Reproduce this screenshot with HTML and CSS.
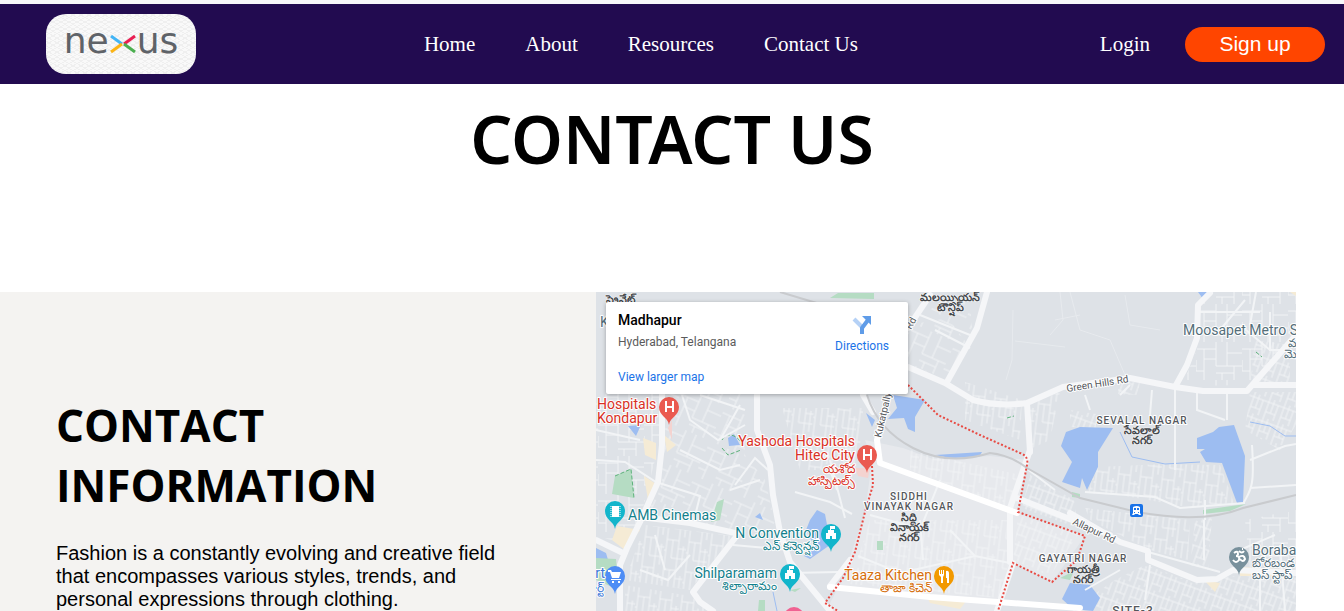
FILE: index.html
```html
<!DOCTYPE html>
<html lang="en">
<head>
<meta charset="utf-8">
<title>Contact Us</title>
<link rel="stylesheet" href="styles.css">
</head>
<body>
<header class="navbar">
  <a class="logo" href="#" aria-label="nexus">
    <span>ne</span>
    <svg class="logo-x" viewBox="0 0 26 18" aria-hidden="true">
      <path d="M1 1 12 9" stroke="#42b4f5"/><path d="M25 1 14 9" stroke="#e91e52"/>
      <path d="M1 17 12 9" stroke="#fbb416"/><path d="M25 17 14 9" stroke="#4caf50"/>
    </svg>
    <span>us</span>
  </a>
  <nav class="menu">
    <a href="#">Home</a><a href="#">About</a><a href="#">Resources</a><a href="#">Contact Us</a>
  </nav>
  <div class="account">
    <a href="#">Login</a>
    <button class="signup" type="button">Sign up</button>
  </div>
</header>
<main class="page">
  <h1 class="title">CONTACT US</h1>
  <section class="contact">
    <div class="info">
      <h2>CONTACT INFORMATION</h2>
      <p>Fashion is a constantly evolving and creative field that encompasses various styles, trends, and personal expressions through clothing.</p>
    </div>
    <div class="map">
      <svg class="map-canvas" viewBox="596 292 700 319" preserveAspectRatio="xMinYMin slice" role="img" aria-label="Map of Madhapur">
        <defs>
          <pattern id="blocks" width="46" height="38" patternUnits="userSpaceOnUse">
            <path class="lane" d="M0 7H20V0M8 7V38M20 7V24H46M31 0V24M0 29H8M8 17H20M31 11H46M38 24V38M20 31H38M26 31V38M0 18V29"/>
          </pattern>
          <pattern id="slanted" width="46" height="38" patternUnits="userSpaceOnUse" patternTransform="rotate(24)">
            <path class="lane" d="M0 7H20V0M8 7V38M20 7V24H46M31 0V24M0 29H8M8 17H20M31 11H46M38 24V38M20 31H38M26 31V38"/>
          </pattern>
          <pattern id="tight" width="22" height="30" patternUnits="userSpaceOnUse" patternTransform="rotate(7)">
            <path class="lane" d="M2 0V30M8 4V22M14 0V30M19 9V30M2 4H14M8 22H22M0 15H2M14 12H22"/>
          </pattern>
          <pattern id="fine" width="16" height="20" patternUnits="userSpaceOnUse" patternTransform="rotate(20)">
            <path class="lane" d="M2 0V20M7 0V14M12 4V20M0 4H16M2 14H12"/>
          </pattern>
          <path id="pin" d="M0 18C-1 10-10 9-10 0A10 10 0 0 1 10 0C10 9 1 10 0 18Z"/>
        </defs>
        <rect class="ground" x="596" y="292" width="700" height="319"/>
        <path class="town" d="M872 462 1017 513 1085 536 1052 582 1013 563 998 611H826L843 578 865 512Z"/>
        <path class="town" d="M865 440 903 448 933 459 990 456 1027 460 1018 512 873 462Z"/>

        <g>
          <path fill="url(#blocks)" d="M596 394H660V440L640 520 625 545 596 535Z"/>
          <path fill="url(#slanted)" d="M664 394H745V455L765 480 778 535 735 530 645 515 662 480Z"/>
          <path fill="url(#tight)" d="M782 408H863V428L855 470H800ZM645 525 733 536 690 590 625 580ZM625 585 690 596 710 611H625Z"/>
          <path fill="url(#slanted)" d="M908 325 948 318 968 345 948 380 908 364ZM970 300 948 294 930 310 972 330Z"/>
          <path fill="url(#tight)" d="M965 382 1022 400 1020 440 965 420ZM1028 405 1060 392 1050 440 1028 450Z"/>
          <path fill="url(#blocks)" d="M1200 292H1296V330L1250 385 1182 386 1197 350Z"/>
          <path fill="url(#fine)" d="M1250 392H1296V425L1280 450 1245 430ZM1255 340 1290 345V385H1250Z"/>
          <path fill="url(#tight)" d="M870 520 1010 520V558L1000 598 850 584ZM910 450 1020 475 1010 508 910 470Z"/>
          <path fill="url(#fine)" d="M1018 515 1078 535 1050 576 1013 560ZM1030 475 1074 500 1078 528 1022 508Z"/>
          <path fill="url(#tight)" d="M1096 467 1165 464 1220 465 1234 503 1187 507 1120 495 1088 493ZM1085 508 1190 520 1188 560 1150 550 1090 520Z"/>
          <path fill="url(#fine)" d="M1195 520 1212 518 1208 570 1190 565ZM1145 565 1196 583 1232 576 1296 577V611H1070L1115 580Z"/>
          <path fill="url(#blocks)" d="M1245 520 1296 510V570H1250Z"/>
          <path fill="url(#fine)" d="M1118 380 1140 383 1137 395 1118 394ZM1070 410 1096 414V428L1070 427Z"/>
        </g>

        <g class="water">
          <path d="M893 395 925 400 915 417 915 432 908 429 904 418 888 419 897 408Z"/>
          <path d="M1066 432 1080 427 1113 428 1098 452 1098 467 1087 490 1082 478 1080 488 1062 482 1072 462 1061 446Z"/>
          <path d="M1197 438 1213 432 1219 427 1234 425 1245 456 1243 502 1237 503 1222 463 1206 462 1200 452 1205 449 1197 449Z"/>
          <path d="M1062 599 1070 583 1090 585 1100 598 1093 611 1073 609Z"/>
          <path d="M810 520 817 510 825 514 828 530 830 545 810 559 804 556 814 545 806 530Z"/>
          <path d="M935 455 982 452 979 457 950 458ZM1198 292H1210L1203 299Z"/>
          <path d="M628 426 641 425 636 436ZM728 438 734 434 740 445 729 446ZM760 513 763 520 755 517ZM866 413 875 420 872 427ZM596 548 606 553 611 570 596 565Z"/>
          <path class="brook" d="M1250 422 1270 426 1285 436 1296 436M1120 432 1132 457 1165 464 1200 462M773 592 777 611"/>
        </g>
        <g class="park">
          <path d="M615 476 631 469 634 498 612 494ZM717 502 724 499 720 520 711 522ZM830 298 838 293 874 293V299ZM877 541H883V550H877ZM1072 492 1080 494V498L1072 497ZM1203 510 1246 504 1230 511 1203 514ZM1060 578 1074 571 1070 580ZM790 590 801 588 795 592ZM759 600H765V611H758ZM596 558 616 559 619 590 596 580Z"/>
          <path class="park-edge" d="M722 440C726 432 735 434 741 442M722 448 728 455 741 450M1007 418 1014 416M1256 352 1262 357M615 476 631 469 634 498"/>
        </g>
        <g class="shops">
          <path d="M643 438 656 443V460L645 455ZM664 435 676 445 667 452ZM644 476 656 484 648 500ZM617 526 640 530 625 550 612 540ZM927 597 967 600 960 609 930 603ZM1204 580 1220 583 1215 592ZM1240 567 1296 570V576H1240ZM1290 292H1296V296Z"/>
          <path class="clinic" d="M668 428 672 420 672 440ZM855 468 870 468 868 478 858 476Z"/>
        </g>

        <g class="street">
          <path d="M596 460 625 462 656 482 700 496 694 520M680 450 720 470 740 465M682 395 690 420 718 440 745 425M740 405 720 440M700 395 745 410M730 490 760 480M735 485 755 458 768 470M795 492 830 502 852 514M830 470 837 490M640 570 668 580 690 555M655 535 665 570M790 573 838 572M845 518 830 460M733 545 790 550M596 430 640 440"/>
          <path d="M870 515 910 526M858 556 900 573 975 556 1010 563M920 520 923 560M940 480 920 530M950 530 975 556M1022 465 1055 490M935 330 970 348M920 315 970 335M1200 312 1260 312M1256 292 1250 325M1270 312V350L1283 350M1240 325 1270 350M1220 330 1245 300M1152 390 1150 415M1175 390V470M1197 390V410L1225 420M1227 392V420M1205 500V520M1204 520V560M1120 395 1130 385M1085 395 1090 410"/>
          <path d="M1252 445C1255 490 1250 490 1243 504M1250 460 1285 446 1296 444M1250 488 1296 485M1085 492 1155 497 1180 508 1245 503M1240 550 1275 535M1148 552 1220 572M1150 565 1145 600M1280 545 1285 611M1260 580V611M1085 590 1120 570"/>
        </g>
        <path class="trail" d="M1013 310 1012 360 1006 380M1015 341 1065 347M1070 292 1080 330 1110 340 1125 375M1055 320 1080 315M1125 295 1130 325 1160 330M1060 292 1063 320 1050 335"/>
        <g class="road">
          <path d="M662 394 662 445 658 482 640 522 627 548 620 565 620 611M596 540 623 553M640 517 690 523 735 533M735 538 693 592 700 602 713 611M757 394V430L770 465 773 495 780 532 790 562 817 595 830 611M863 395 873 412M930 295 908 328"/>
          <path d="M908 367 945 383 973 400Q1000 407 1027 403L1063 387 1130 378 1175 387 1203 391H1247L1296 335M987 292 977 328 947 382M1210 293 1198 305 1197 338 1187 365 1175 387M1253 385H1296M1027 403 1030 452"/>
          <path d="M1030 450 1010 508V562M1017 498 1110 535M1070 513 1120 542 1148 551 1148 560 1197 580 1217 579 1233 570 1296 573M1013 563 997 611M830 586 850 560"/>
          <path class="avenue" d="M890 390 877 440 880 463 1017 513M830 587 930 597 1080 608"/>
        </g>
        <path class="rail" d="M867 395Q878 430 913 448T990 453Q1010 455 1027 468L1080 498 1137 512Q1203 524 1243 508L1296 495"/>
        <path class="rail" d="M780 292 820 304"/>
        <path class="boundary" d="M908 385 938 415 980 435 1020 453Q1029 456 1027 465L1018 512 1085 536 1077 560 1052 582 1013 563 998 611M872 466 873 485 865 512 855 552 843 578 825 603 838 611"/>

        <g class="pins">
          <use href="#pin" x="669" y="407" fill="#ea5a50"/><use href="#pin" x="867" y="455" fill="#ea5a50"/>
          <use href="#pin" x="615" y="511" fill="#12b5cb"/><use href="#pin" x="831" y="534" fill="#12b5cb"/>
          <use href="#pin" x="790" y="574" fill="#12b5cb"/><use href="#pin" x="615" y="576" fill="#4e8df5"/>
          <use href="#pin" x="944" y="576" fill="#f29900"/><use href="#pin" x="1239" y="557" fill="#78909c"/>
          <use href="#pin" x="794" y="617" fill="#f06292"/>
        </g>
        <g class="pin-mark">
          <path d="M666 401V412M673 401V412M666 407H673M864 449V460M871 449V460M864 455H871"/>
        </g>
        <g class="pin-fill">
          <path d="M612 506h7v11h-7z"/>
          <path d="M826 539v-6h2v-3h2v-4h5v3h-4v1h3v3h2v6h-4v-3h-2v3zM785 579v-6h2v-3h2v-4h5v3h-4v1h3v3h2v6h-4v-3h-2v3z"/>
          <path d="M608 570h3l1 2h9l-2 6h-7l-2-6h-2zM611 579h10v1h-10zM612 581h2v2h-2zM618 581h2v2h-2z"/>
          <path d="M939 570h1v4h1v-4h1v4h1v-4h1v5l-1 2v6h-2v-6l-2-2zM946 571q3-1 3 3v9h-2v-5h-1z"/>
        </g>
        <path class="film" d="M611 506V517M620 506V517"/>
        <path class="om" d="M1234 553q4-3 4 1 0 2-2 2 4 0 3 4-3 4-6 0M1239 557q5-3 6 2-2 4-5 0M1239 551q3 3 5 0M1242 549h1"/>
        <rect x="1130" y="504" width="13" height="13" rx="2" fill="#1a73e8"/>
        <path fill="#fff" fill-rule="evenodd" d="M1133 507q4-2 7 0v6l1 2h-2l-1-1h-3l-1 1h-2l1-2zM1134 508v2h2v-2zm3 0v2h2v-2zm-3 4v1h1v-1zm4 0v1h1v-1z"/>

        <g class="label red">
          <text x="597" y="409">Hospitals</text><text x="597" y="423">Kondapur</text>
          <text x="855" y="446" text-anchor="end">Yashoda Hospitals</text><text x="855" y="460" text-anchor="end">Hitec City</text>
          <text class="small" x="855" y="473" text-anchor="end">యశోద</text><text class="small" x="855" y="485" text-anchor="end">హాస్పిటల్స్</text>
        </g>
        <g class="label teal">
          <text x="628" y="520">AMB Cinemas</text>
          <text x="819" y="538" text-anchor="end">N Convention</text><text class="small" x="819" y="550" text-anchor="end">ఎన్ కన్వెన్షన్</text>
          <text x="777" y="578" text-anchor="end">Shilparamam</text><text class="small" x="777" y="590" text-anchor="end">శిల్పారామం</text>
        </g>
        <g class="label orange">
          <text x="932" y="580" text-anchor="end">Taaza Kitchen</text><text class="small" x="932" y="592" text-anchor="end">తాజా కిచెన్</text>
        </g>
        <g class="label slate">
          <text x="1183" y="335">Moosapet Metro Station</text><text class="small" x="1288" y="347">మూసాపేట</text><text class="small" x="1284" y="358">మెట్రో</text>
          <text x="1252" y="555">Borabanda</text><text class="small" x="1252" y="567">బోరబండ</text><text class="small" x="1252" y="579">బస్ స్టాప్</text>
          <text x="600" y="327">K</text>
        </g>
        <g class="label blue"><text x="605" y="578" text-anchor="end">Mart</text><text class="small" x="604" y="592" text-anchor="end">మార్ట్</text></g>
        <g class="label area-local">
          <text x="909" y="521">సిద్ధి</text><text x="909" y="531">వినాయక్</text><text x="909" y="541">నగర్</text>
          <text x="1142" y="434">సేవలాల్</text><text x="1142" y="444">నగర్</text>
          <text x="1083" y="573">గాయత్రీ</text><text x="1083" y="583">నగర్</text>
          <text x="950" y="301">మలయ్సియన్</text><text x="950" y="311">టౌన్షిప్</text><text x="620" y="303">ప్రైవేట్</text>
        </g>
        <g class="label area">
          <text x="909" y="500">SIDDHI</text><text x="909" y="510">VINAYAK NAGAR</text>
          <text x="1142" y="424">SEVALAL NAGAR</text>
          <text x="1083" y="562">GAYATRI NAGAR</text>
          <text class="site" x="1133" y="615">SITE-3</text>
        </g>
        <g class="label way">
          <text transform="translate(1067 392) rotate(-9)">Green Hills Rd</text>
          <text transform="translate(1072 524) rotate(25)">Allapur Rd</text>
          <text transform="translate(881 438) rotate(-77)">Kukatpally</text>
          <text transform="translate(911 330) rotate(-62)">Rd</text>
        </g>
      </svg>
      <div class="place">
        <div class="place-text">
          <strong>Madhapur</strong>
          <span>Hyderabad, Telangana</span>
          <a href="#">View larger map</a>
        </div>
        <a class="directions" href="#">
          <svg viewBox="0 0 20 20" aria-hidden="true">
            <path d="M2 4 10 12" stroke="#b5d1f6" stroke-width="4" fill="none"/>
            <path d="M10 19V13L16 5" stroke="#5f9ce8" stroke-width="4" fill="none" stroke-linejoin="round"/>
            <path d="M10 1H19V10Z" fill="#5f9ce8"/>
          </svg>
          Directions
        </a>
      </div>
    </div>
  </section>
</main>
</body>
</html>
```

FILE: styles.css
```css
* { box-sizing: border-box; }
body {
  margin: 0;
  min-height: 100vh;
  display: flex;
  flex-direction: column;
  background: #fff;
  color: #000;
  font-family: "Liberation Sans", Arial, sans-serif;
  border-top: 4px solid #f8f8fa;
}
a { color: inherit; text-decoration: none; }

.navbar {
  display: flex;
  align-items: center;
  justify-content: space-between;
  height: 80px;
  padding: 0 19px 0 46px;
  background: #220b50;
  color: #fff;
  font: 21px/24px "Liberation Serif", "Times New Roman", serif;
}
.logo {
  display: flex;
  align-items: center;
  justify-content: center;
  width: 150px;
  height: 60px;
  border-radius: 20px;
  background:
    repeating-linear-gradient(30deg, #efefef 0 1px, transparent 1px 4px),
    repeating-linear-gradient(-30deg, #efefef 0 1px, transparent 1px 4px),
    #f9f9f9;
  color: #5f6368;
  font: 400 36px/40px "DejaVu Sans", sans-serif;
}
.logo span { padding-bottom: 6px; }
.logo-x { width: 28px; height: 18px; fill: none; stroke-width: 3; }
.menu { display: flex; gap: 50px; padding-right: 14px; }
.account { display: flex; align-items: center; gap: 35px; }
.signup {
  width: 140px;
  height: 35px;
  padding: 0;
  border: 0;
  border-radius: 18px;
  background: #ff4500;
  color: #fff;
  font: 21px/24px "Liberation Sans", Arial, sans-serif;
}

.page { flex: 1; display: flex; flex-direction: column; }
.title {
  margin: 0;
  padding: 12px 0 112px;
  text-align: center;
  font: 600 66px/84px "Noto Sans", sans-serif;
}
.contact {
  flex: 1;
  display: grid;
  grid-template-columns: 596fr 700fr;
  margin-right: 48px;
}
.info { padding: 103px 56px 0; background: #f4f3f1; }
.info h2 {
  margin: 0;
  max-width: 400px;
  font: 700 44px/60px "Open Sans", "Segoe UI", sans-serif;
}
.info p { max-width: 450px; margin: 27px 0 0; font-size: 20px; line-height: 23px; }

.map { position: relative; overflow: hidden; font-family: Roboto, sans-serif; }
.map-canvas { position: absolute; inset: 0; width: 100%; height: 100%; }
.place {
  position: absolute;
  top: 10px;
  left: 10px;
  display: flex;
  justify-content: space-between;
  width: 302px;
  height: 92px;
  padding: 9px 19px 0 12px;
  border-radius: 2px;
  background: #fff;
  box-shadow: 0 1px 4px rgba(0, 0, 0, .3);
  font-size: 12px;
  line-height: 16px;
}
.place-text { display: flex; flex-direction: column; }
.place-text strong { font-size: 14px; line-height: 18px; font-weight: 500; }
.place-text span { margin: 5px 0 19px; color: #5b5b5b; }
.place a { color: #1a73e8; }
.directions { display: flex; flex-direction: column; align-items: center; gap: 3px; padding-top: 4px; }
.directions svg { width: 20px; height: 20px; }

.ground { fill: #dee2e7; }
.town { fill: #e7e9ed; }
.lane, .street, .road, .trail, .rail, .boundary, .brook, .park-edge, .pin-mark, .film, .om { fill: none; }
.lane { stroke: #f1f3f5; stroke-width: 1; }
.street { stroke: #f2f4f6; stroke-width: 2; }
.trail { stroke: #e7eaee; stroke-width: 1; }
.road { stroke: #f5f6f8; stroke-width: 6; stroke-linejoin: round; stroke-linecap: round; }
.avenue { stroke: #fff; }
.water { fill: #9dbdf1; }
.brook { fill: none; stroke: #9dbdf1; stroke-width: 1; }
.park { fill: #b5dcc3; }
.park-edge { stroke: #5cb27a; stroke-width: 1; stroke-dasharray: 4 2; }
.shops { fill: #f5ebd5; }
.clinic { fill: #f4d3d0; }
.rail { stroke: #c9cbce; stroke-width: 2; }
.boundary { stroke: #e84a43; stroke-width: 2; stroke-dasharray: 2 2; }
.pin-mark { stroke: #fff; stroke-width: 2; }
.pin-fill { fill: #fff; }
.film { stroke: #fff; stroke-width: 1; stroke-dasharray: 1 1; }
.om { stroke: #fff; stroke-width: 2; }
.label { font-size: 14px; paint-order: stroke; stroke: #fff; stroke-width: 2px; stroke-linejoin: round; }
.small { font-size: 12px; }
.red { fill: #d93025; }
.teal { fill: #12808c; }
.orange { fill: #d56e0c; }
.slate { fill: #546e7a; }
.blue { fill: #3c78d8; }
.area { fill: #54575c; font-size: 10px; font-weight: 500; letter-spacing: 1px; text-anchor: middle; }
.area-local { fill: #44474b; font-size: 11px; font-weight: 600; stroke-width: 1px; text-anchor: middle; }
.area .site { font-size: 12px; }
.way { fill: #54575c; font-size: 10px; }
```
